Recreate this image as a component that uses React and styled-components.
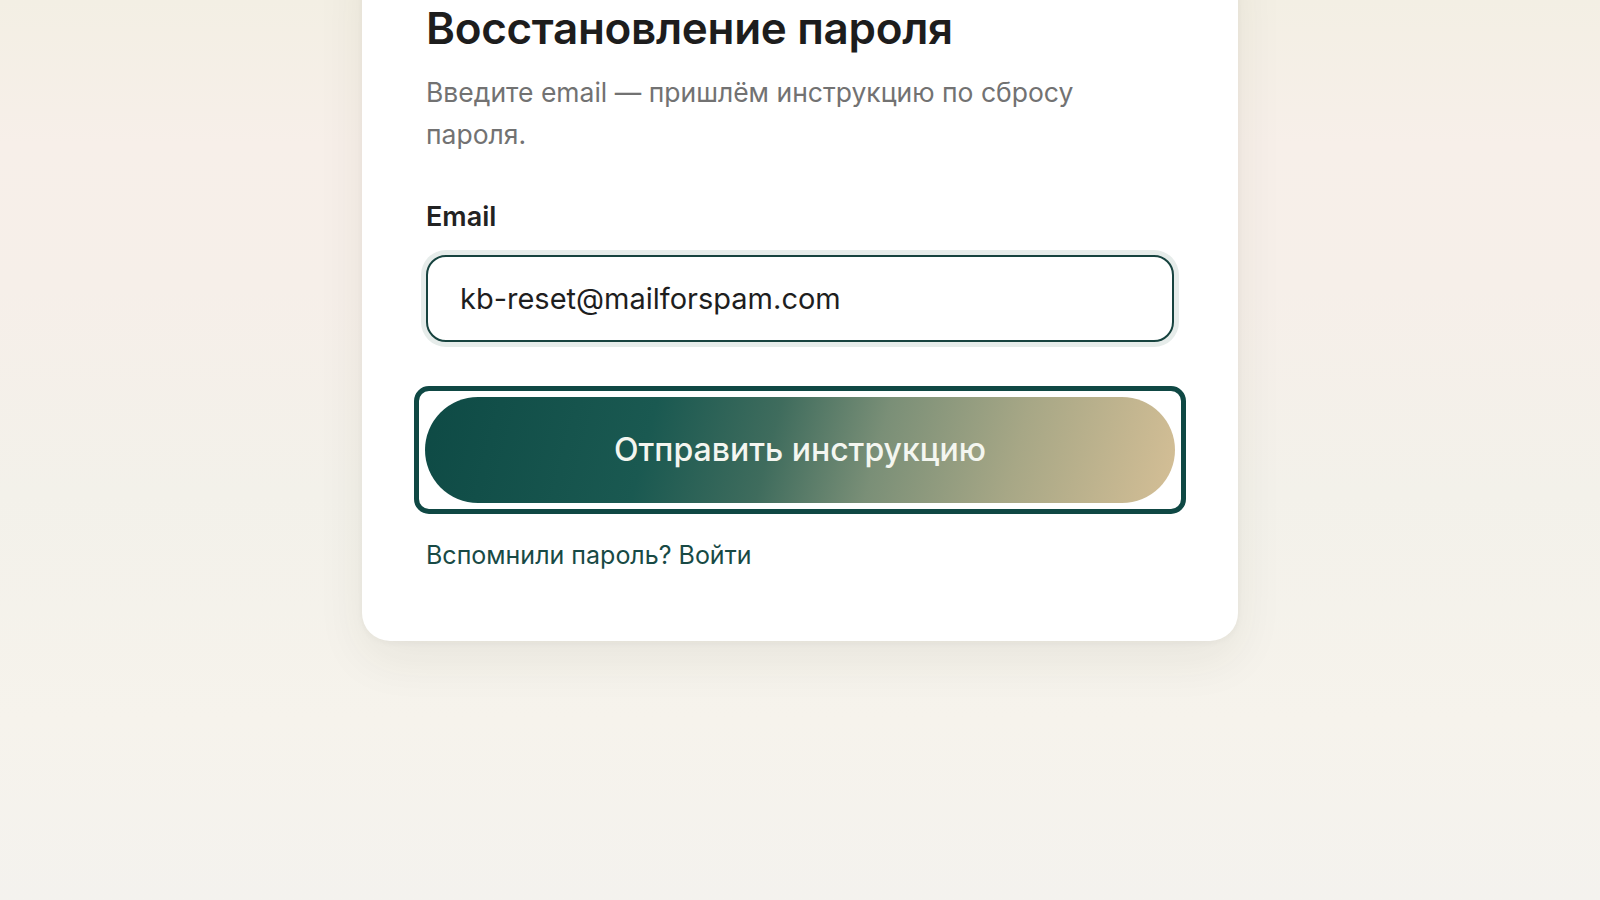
import styled, { createGlobalStyle } from 'styled-components'

const GlobalStyle = createGlobalStyle`
	* {
		box-sizing: border-box;
	}
	html, body {
		margin: 0;
		padding: 0;
		height: 100%;
		overflow: hidden;
	}
	body {
		font-family: Inter, "Noto Sans", "Liberation Sans", sans-serif;
		background: #f5f2eb;
	}
`

const App = () => {
	return (
		<>
			<GlobalStyle />
			<Page>
				<Card>
					<Title>Восстановление пароля</Title>
					<Lead>Введите email — пришлём инструкцию по сбросу пароля.</Lead>
					<Form onSubmit={e => e.preventDefault()}>
						<Field>
							<Label htmlFor="email">Email</Label>
							<Input id="email" type="email" defaultValue="kb-reset@mailforspam.com" />
						</Field>
						<FocusFrame>
							<SubmitButton type="submit">Отправить инструкцию</SubmitButton>
						</FocusFrame>
					</Form>
					<BackLink href="#">Вспомнили пароль? Войти</BackLink>
				</Card>
			</Page>
		</>
	)
}

const Page = styled.div`
	min-height: 100vh;
	display: flex;
	justify-content: center;
	align-items: flex-start;
	background: linear-gradient(
		180deg,
		#f3efe4 0%,
		#f7efe9 16%,
		#f6efe9 32%,
		#f3f1ea 55%,
		#f6f3ec 80%,
		#f4f2ee 100%
	);
`

const Card = styled.div`
	width: 876px;
	margin-top: -62px;
	padding: 64px 64px 70px;
	background: #ffffff;
	border-radius: 28px;
	box-shadow: 0 18px 50px rgba(60, 50, 30, 0.07), 0 2px 6px rgba(60, 50, 30, 0.04);
	display: flex;
	flex-direction: column;
`

const Title = styled.h1`
	margin: 0;
	font-size: 44px;
	line-height: 1.2;
	font-weight: 600;
	letter-spacing: -0.3px;
	color: #1d1d1d;
`

const Lead = styled.p`
	margin: 16px 0 0;
	font-size: 26.5px;
	line-height: 42px;
	font-weight: 400;
	color: #727272;
	max-width: 680px;
`

const Form = styled.form`
	margin-top: 44px;
	display: flex;
	flex-direction: column;
	gap: 44px;
`

const Field = styled.div`
	display: flex;
	flex-direction: column;
	gap: 21px;
`

const Label = styled.label`
	font-size: 27px;
	line-height: 1.3;
	font-weight: 600;
	color: #222222;
`

const Input = styled.input`
	height: 87px;
	padding: 0 32px;
	border: 2px solid #17433f;
	border-radius: 20px;
	box-shadow: 0 0 0 5px #e6ecea;
	font-family: inherit;
	font-size: 29px;
	color: #1e1e1e;
	background: #ffffff;
	outline: none;
`

const FocusFrame = styled.div`
	margin: 0 -12px;
	padding: 6px;
	border: 5px solid #0f4844;
	border-radius: 15px;
`

const SubmitButton = styled.button`
	width: 100%;
	height: 106px;
	border: none;
	border-radius: 999px;
	background: linear-gradient(
		105deg,
		#0e4a45 0%,
		#1a5951 30%,
		#3f6c5d 46%,
		#7a8f77 60%,
		#a7a786 78%,
		#d5bf96 100%
	);
	font-family: inherit;
	font-size: 32px;
	font-weight: 500;
	color: #f4f6f0;
	cursor: pointer;
`

const BackLink = styled.a`
	margin-top: 25px;
	font-size: 25px;
	line-height: 1.3;
	color: #184a45;
	text-decoration: none;
`

export default App
